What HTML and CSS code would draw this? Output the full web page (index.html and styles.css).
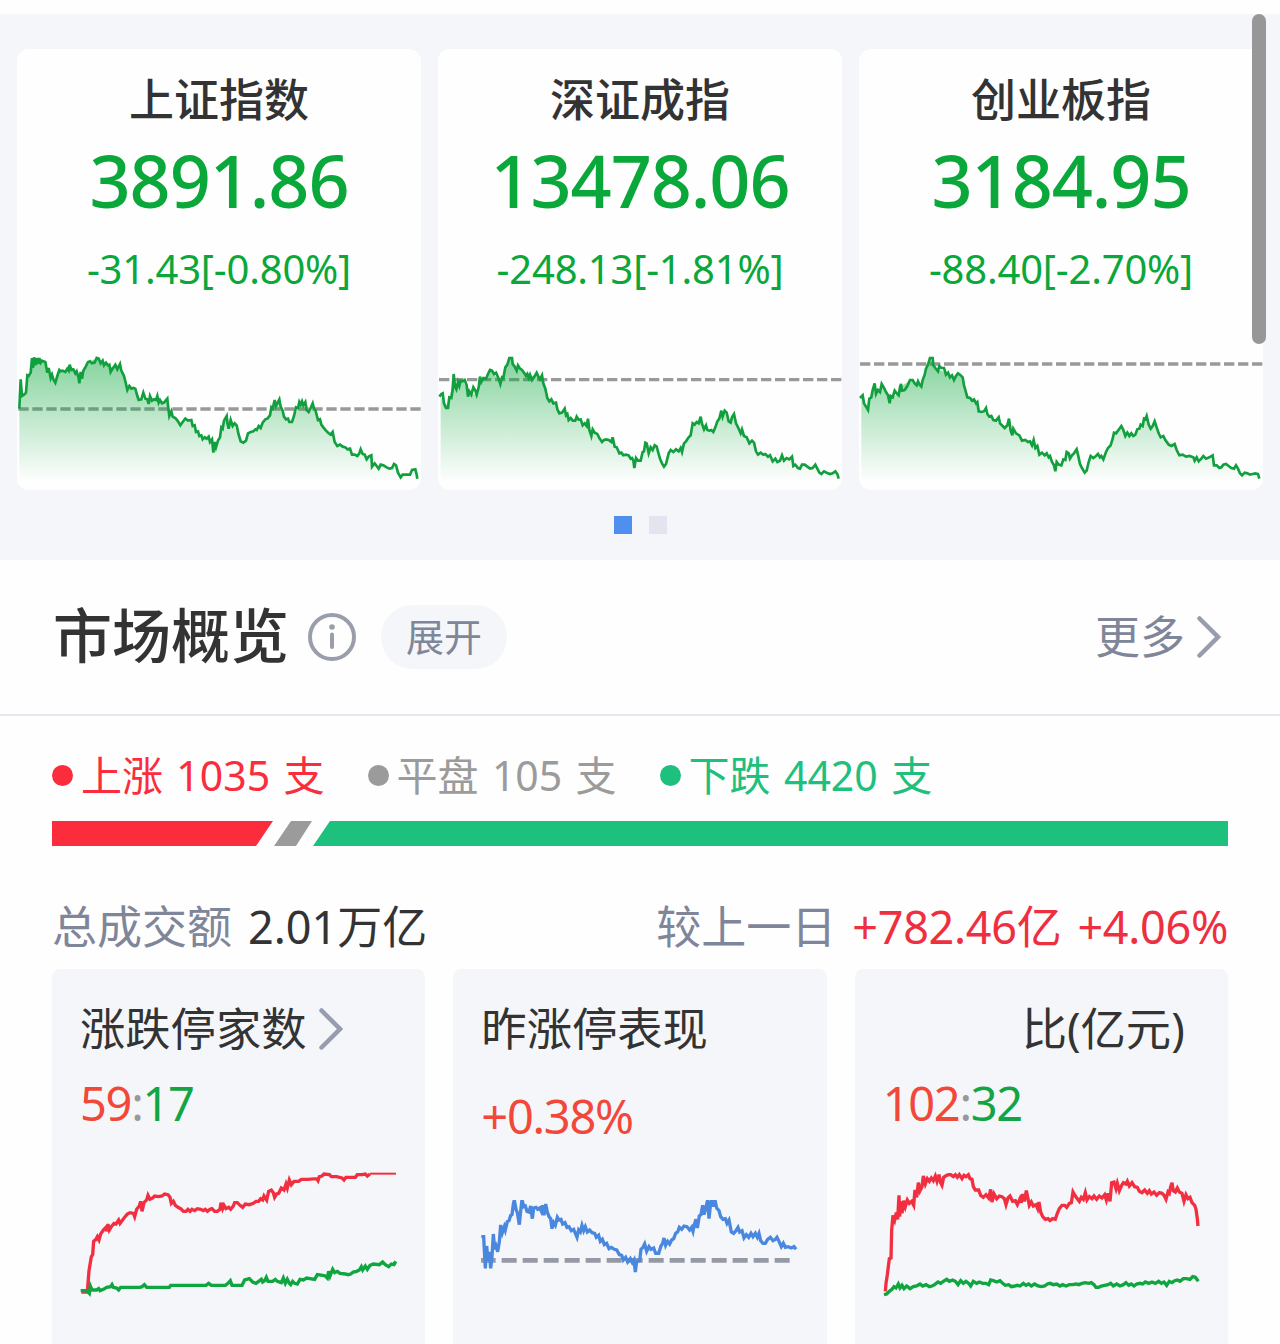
FILE: index.html
```html
<!DOCTYPE html>
<html lang="zh-CN">

<head>
    <meta charset="UTF-8">
    <meta name="viewport" content="width=device-width, initial-scale=1.0">
    <title>市场概览</title>
    <link rel="stylesheet" href="styles.css">
</head>

<body>
    <div class="indexes">
        <ul class="index_list">
            <li class="index_card">
                <h3>上证指数</h3>
                <p class="price">3891.86</p>
                <p class="change">-31.43[-0.80%]</p>
                <svg class="trend" viewBox="51 45 1212 405">
                    <defs>
                        <linearGradient id="fade" gradientUnits="userSpaceOnUse" x1="0" y1="50" x2="0" y2="425">
                            <stop offset="0" stop-color="#0aa83a" stop-opacity="0.5" />
                            <stop offset="1" stop-color="#0aa83a" stop-opacity="0" />
                        </linearGradient>
                    </defs>
                    <line class="base" x1="55" y1="207" x2="1263" y2="207" />
                    <path class="area" d="M58 206L62 122L68 166L78 158L82 108L90 100L96 54L132 62L146 100L166 126L178 92L196 94L208 76L236 110L266 66L292 54L332 82L360 76L380 138L404 146L420 178L500 184L512 222L540 250L574 240L600 288L624 294L640 326L658 292L678 230L706 254L730 306L750 276L782 260L808 230L822 190L838 186L860 242L878 242L900 190L926 212L936 196L966 262L998 278L1010 316L1064 344L1082 334L1096 356L1110 348L1118 376L1134 380L1168 384L1182 374L1202 410L1232 400L1246 390L1252 416V425H58Z" />
                    <polyline class="down" points="58,206 62,118 66,168 72,164 78,158 82,106 86,108 92,98 96,54 99,84 102,52 106,76 110,54 114,72 118,54 122,68 126,62 130,64 136,66 142,98 146,84 152,114 156,104 160,118 166,128 172,108 178,90 182,94 188,92 196,96 202,86 206,92 209,74 214,90 220,88 226,100 230,94 236,114 238,130 242,96 246,116 250,92 256,82 264,66 270,64 276,70 284,68 290,54 296,56 302,70 308,62 312,76 318,68 324,76 328,74 332,96 338,86 346,74 352,88 360,72 364,92 372,108 378,132 382,150 388,138 394,146 400,144 406,146 412,168 416,180 424,178 430,158 436,176 442,178 446,192 450,168 456,182 462,178 468,180 472,168 476,188 480,180 486,190 492,188 502,176 504,196 508,228 514,214 518,230 526,234 534,244 541,256 548,246 556,236 564,242 574,240 578,258 584,256 588,276 594,274 598,288 604,286 608,298 614,292 620,296 626,290 630,306 636,298 640,338 644,306 648,322 654,302 660,292 664,262 668,266 672,242 680,228 682,250 686,266 692,240 698,258 704,250 710,256 716,284 722,304 730,308 738,302 744,280 752,276 760,274 766,268 770,270 776,258 782,264 788,248 796,238 802,236 810,226 814,202 818,206 824,180 828,198 832,190 838,178 842,200 848,212 852,230 858,238 864,236 868,246 876,246 882,228 888,202 894,204 898,186 902,194 906,184 910,196 916,186 920,210 926,216 932,204 938,190 942,206 946,210 954,240 960,238 964,254 970,262 978,272 986,280 992,284 998,276 1004,306 1012,318 1020,314 1028,320 1036,322 1042,328 1050,326 1056,344 1064,344 1072,348 1078,340 1082,328 1088,342 1094,344 1100,358 1106,350 1114,346 1116,380 1124,370 1130,378 1136,386 1142,374 1150,376 1160,382 1168,386 1176,384 1182,372 1188,376 1194,398 1202,412 1208,404 1218,404 1230,404 1236,390 1246,388 1250,404 1252,416" />
                </svg>
            </li>
            <li class="index_card">
                <h3>深证成指</h3>
                <p class="price">13478.06</p>
                <p class="change">-248.13[-1.81%]</p>
                <svg class="trend" viewBox="24 45 1212 405">
                    <line class="base" x1="27" y1="119" x2="1236" y2="119" />
                    <path class="area" d="M32 170L44 202L58 180L70 112L80 136L100 124L118 166L142 160L152 124L166 114L182 92L210 124L240 54L262 84L300 110L318 104L336 112L356 178L374 186L390 216L404 212L420 240L468 252L486 276L516 300L548 296L568 342L594 344L614 374L632 362L648 312L676 320L702 378L722 334L756 330L792 250L812 234L830 268L850 274L868 236L880 214L900 244L912 230L932 276L970 306L984 340L1040 362L1084 352L1096 376L1156 378L1174 400L1220 398L1226 416V425H32Z" />
                    <polyline class="down" points="28,170 34,162 38,160 42,190 48,204 54,204 58,172 64,174 68,150 71,102 75,140 79,148 84,126 88,138 92,122 98,124 104,120 110,136 114,170 118,154 124,164 130,142 136,152 140,164 146,142 150,110 154,126 160,114 168,116 174,102 180,90 186,92 192,102 198,98 206,116 211,132 216,112 220,114 226,82 232,74 238,54 246,54 248,72 254,80 260,92 264,76 270,86 276,90 282,98 288,108 292,102 296,114 300,104 306,120 312,112 320,98 326,112 330,118 336,106 340,130 346,146 352,174 358,184 364,178 370,190 378,188 382,208 388,220 396,218 404,206 408,226 412,222 416,240 422,234 428,242 436,242 440,230 446,240 452,238 458,256 464,250 470,258 474,236 478,270 484,288 488,268 494,278 502,282 508,294 516,306 522,300 528,298 536,300 544,306 548,292 554,320 560,322 568,340 574,338 580,346 588,344 596,346 602,356 606,354 610,362 613,384 618,354 624,362 632,362 638,336 642,334 646,308 650,310 656,340 662,322 668,330 674,316 680,320 686,342 690,356 696,370 702,380 708,372 716,340 722,330 730,336 738,328 746,334 752,324 756,336 762,310 768,304 776,292 782,286 788,250 794,254 800,246 806,250 812,230 816,252 822,268 828,256 832,270 838,272 844,270 850,276 856,262 862,244 868,236 874,212 878,230 884,212 890,218 896,244 902,248 906,232 912,222 918,250 924,262 932,280 936,268 942,288 950,292 958,310 966,302 972,308 978,334 984,344 992,338 1000,344 1006,342 1014,350 1020,346 1028,364 1036,356 1042,366 1050,362 1056,346 1062,362 1070,354 1078,358 1086,350 1090,378 1096,374 1104,384 1110,386 1116,374 1124,374 1132,380 1140,386 1148,384 1156,374 1162,386 1168,398 1174,402 1182,394 1190,398 1200,402 1208,400 1216,394 1222,402 1226,416" />
                </svg>
            </li>
            <li class="index_card">
                <h3>创业板指</h3>
                <p class="price">3184.95</p>
                <p class="change">-88.40[-2.70%]</p>
                <svg class="trend" viewBox="27 45 1212 405">
                    <line class="base" x1="30" y1="72" x2="1238" y2="72" />
                    <path class="area" d="M34 172L54 206L62 172L74 134L84 156L96 138L118 178L144 162L154 138L184 120L212 136L230 86L242 54L252 84L290 98L312 116L326 102L340 116L354 170L382 184L392 214L416 224L460 260L476 246L490 278L520 300L552 306L572 342L600 350L616 384L634 372L652 342L680 334L704 396L722 350L760 352L794 278L816 262L832 288L856 284L888 234L902 262L914 250L934 290L974 314L988 344L1046 360L1086 350L1096 376L1160 380L1176 402L1228 402V425H34Z" />
                    <polyline class="down" points="30,174 38,166 42,190 48,200 54,210 58,176 64,172 68,150 74,130 78,162 84,150 90,156 95,132 102,144 108,156 114,166 119,190 122,168 128,172 134,152 140,160 146,166 150,142 153,132 156,152 164,150 172,138 180,120 188,120 194,130 200,136 204,124 210,136 214,140 218,120 224,104 228,86 234,74 240,54 248,54 250,76 256,84 264,94 268,78 274,84 282,84 288,104 294,98 300,112 306,106 312,120 318,108 324,100 330,104 338,112 342,136 346,150 352,172 360,174 366,182 372,178 378,190 382,186 386,214 394,216 402,214 408,204 412,222 418,230 424,228 430,240 438,242 446,232 450,250 458,258 464,264 472,256 477,236 482,272 487,286 490,266 498,280 508,286 516,302 526,300 534,306 540,304 546,316 551,300 556,324 562,318 568,344 576,338 584,346 590,340 596,352 600,348 606,366 612,376 616,394 620,366 626,374 634,376 640,358 646,360 650,336 656,340 660,356 666,346 672,340 680,328 684,344 690,372 696,384 704,398 710,392 716,366 722,348 730,354 738,348 744,342 750,352 754,348 760,358 768,336 774,324 782,316 788,296 792,278 798,280 804,272 814,258 820,270 826,288 832,278 838,288 844,280 850,288 856,284 862,268 868,266 872,254 878,258 882,236 886,238 890,228 896,254 902,266 908,258 914,244 920,262 926,280 932,292 940,288 946,300 956,314 964,318 974,312 980,330 988,346 998,344 1008,350 1018,348 1030,352 1034,362 1040,352 1046,364 1054,356 1060,348 1068,356 1078,352 1088,346 1092,376 1100,376 1108,384 1114,382 1120,374 1128,372 1136,378 1144,384 1152,386 1158,376 1164,386 1170,400 1176,406 1184,398 1192,400 1200,404 1208,402 1216,400 1224,402 1228,416" />
                </svg>
            </li>
        </ul>
        <div class="indicator">
            <i class="active"></i>
            <i></i>
        </div>
        <div class="scrollbar"></div>
    </div>

    <div class="overview_head">
        <h2>市场概览</h2>
        <svg class="info" viewBox="0 0 48 48">
            <circle cx="24" cy="24" r="22" />
            <circle class="dot" cx="24" cy="14" r="2.8" />
            <line x1="24" y1="21.500" x2="24" y2="34" />
        </svg>
        <button class="expand">展开</button>
        <a class="more" href="#">更多<svg class="arrow" viewBox="0 0 24 44">
                <polyline points="2.500,3.500 21,22 2.500,40.500" />
            </svg></a>
    </div>

    <div class="overview">
        <ul class="legend">
            <li class="rise">上涨 1035 支</li>
            <li class="flat">平盘 105 支</li>
            <li class="fall">下跌 4420 支</li>
        </ul>
        <div class="ratio">
            <span class="ratio_rise"></span>
            <span class="ratio_flat"></span>
            <span class="ratio_fall"></span>
        </div>
        <div class="turnover">
            <span class="label">总成交额</span>
            <span class="amount">2.01万亿</span>
            <span class="label prev_day">较上一日</span>
            <span class="diff">+782.46亿</span>
            <span class="diff">+4.06%</span>
        </div>

        <div class="stats">
            <div class="stat">
                <h4>涨跌停家数<svg class="arrow" viewBox="0 0 24 44">
                        <polyline points="2.500,3.500 21,22 2.500,40.500" />
                    </svg></h4>
                <p class="num"><span class="up">59</span><span class="colon">:</span><span class="dn">17</span></p>
                <svg class="chart" viewBox="120 60 952 450">
                    <polyline class="red" points="124,456 142,456 144,430 147,392 154,350 158,344 161,304 168,298 172,290 177,300 182,282 190,270 198,262 200,274 204,252 208,270 214,260 222,250 228,252 236,240 240,250 246,242 254,232 262,222 270,218 280,220 284,230 290,208 298,198 302,184 306,214 312,188 320,180 324,166 330,178 338,174 344,168 356,170 366,168 374,162 384,164 390,172 394,190 400,184 406,196 414,202 422,206 430,214 438,214 444,208 450,214 456,208 464,212 472,206 482,208 490,212 496,208 502,214 510,208 516,206 524,214 532,214 540,208 543,188 548,206 552,196 558,206 566,202 572,208 580,198 584,188 592,188 600,196 608,202 616,192 628,194 640,190 648,184 656,184 662,176 668,180 672,168 680,180 686,154 694,150 700,158 704,172 710,162 716,160 724,144 732,150 738,132 742,144 748,120 754,134 762,124 776,124 784,118 804,118 830,116 834,122 838,110 846,108 852,102 868,104 874,110 890,110 906,114 912,120 918,112 946,112 952,104 966,104 976,102 982,108 990,102" />
                    <line class="red thin" x1="990" y1="101" x2="1068" y2="101" />
                    <polyline class="green" points="122,452 140,452 148,460 151,438 156,450 170,450 176,446 180,452 190,448 200,442 212,440 216,434 220,442 230,444 236,450 242,442 300,442 306,440 313,434 320,442 388,442 392,436 498,436 506,430 514,436 556,436 564,430 571,422 576,436 606,436 614,420 628,416 638,426 648,430 656,424 664,418 668,426 674,422 679,412 684,424 698,424 706,418 712,424 724,428 730,414 736,430 742,418 748,430 752,434 758,424 764,430 772,432 780,418 790,420 800,414 824,418 832,404 848,406 856,408 862,414 866,394 870,408 878,388 884,398 892,394 900,400 916,402 924,404 932,402 940,396 950,394 958,390 964,380 968,390 976,378 982,388 990,376 1000,372 1018,374 1028,366 1036,374 1046,380 1054,372 1062,374 1067,364" />
                </svg>
            </div>
            <div class="stat">
                <h4>昨涨停表现</h4>
                <p class="num single"><span class="up">+0.38%</span></p>
                <svg class="chart" viewBox="124 60 952 450">
                    <clipPath id="top">
                        <rect x="100" y="180" width="1000" height="300" />
                    </clipPath>
                    <line class="zero" x1="123" y1="361" x2="1050" y2="361" />
                    <polyline class="blue" clip-path="url(#top)" points="125,290 132,290 134,330 137,385 141,318 145,362 149,336 153,385 157,350 161,282 165,328 169,318 174,335 179,305 183,255 188,278 194,260 197,270 203,245 208,242 213,226 217,224 221,192 224,180 229,208 233,218 239,254 243,214 247,178 252,200 257,198 262,214 268,216 273,198 278,236 282,204 289,202 294,208 300,204 305,214 309,196 313,226 318,192 323,216 328,230 333,236 337,266 342,248 347,256 353,232 358,240 364,238 369,252 376,248 382,262 388,260 395,272 402,268 407,280 412,292 417,270 422,276 427,256 432,272 437,260 443,276 450,270 457,278 465,280 470,292 477,286 482,304 488,298 494,314 501,310 508,326 515,322 524,328 531,330 539,344 546,346 551,360 558,352 564,366 572,356 578,368 583,360 587,396 591,364 600,362 604,328 610,322 615,312 621,334 628,320 634,328 642,324 648,340 657,340 664,318 669,310 673,294 678,316 684,304 690,312 696,300 702,296 708,280 714,276 719,262 726,268 733,258 742,260 750,270 756,262 760,274 764,254 769,238 773,264 779,228 784,224 789,196 793,224 798,206 804,180 808,236 813,190 817,176 821,200 826,180 831,204 838,212 843,230 850,238 857,236 862,250 868,240 875,276 882,280 889,272 895,262 900,276 907,272 913,294 920,284 927,292 934,280 940,290 947,280 953,292 958,280 963,302 970,310 977,310 984,298 992,292 1000,302 1007,298 1012,292 1018,304 1025,320 1031,310 1037,322 1045,320 1055,324 1063,320 1069,328" />
                </svg>
            </div>
            <div class="stat">
                <h4 class="clipped">比(亿元)</h4>
                <p class="num"><span class="up">102</span><span class="colon">:</span><span class="dn">32</span></p>
                <svg class="chart" viewBox="129 60 952 450">
                    <polyline class="red" points="136,454 138,430 142,404 148,356 153,354 155,270 159,226 164,240 169,218 173,238 177,166 179,230 183,184 186,220 191,182 196,200 202,180 208,190 215,184 221,196 225,150 230,172 235,128 240,152 246,140 250,108 256,132 262,116 268,124 274,114 280,122 286,108 291,124 297,104 302,128 306,136 311,112 320,106 326,104 332,104 340,110 346,104 352,112 358,104 366,116 372,106 378,110 385,104 390,116 396,118 400,140 406,150 416,150 422,166 430,172 438,164 446,174 452,148 456,186 462,162 470,176 478,168 486,170 493,176 498,194 504,174 510,168 518,184 526,182 532,194 540,176 544,188 548,162 553,184 559,152 564,176 568,196 574,186 580,198 588,194 593,206 597,186 602,216 608,230 616,238 624,236 630,242 638,236 646,238 652,220 658,206 666,196 674,196 680,202 688,190 694,188 699,156 706,168 712,176 718,184 724,172 730,178 736,158 741,180 748,170 756,176 762,168 770,178 778,168 786,174 794,164 799,180 804,160 810,184 815,128 822,126 828,146 832,130 838,152 844,138 850,128 858,132 862,124 868,138 876,128 884,140 892,142 898,154 906,158 914,150 922,160 928,152 934,162 942,156 950,166 958,158 966,160 972,166 978,178 984,156 988,160 992,140 996,128 1000,152 1006,156 1012,144 1018,156 1026,160 1032,184 1038,164 1044,176 1050,172 1056,188 1064,196 1068,208 1072,236 1074,258" />
                    <polyline class="green" points="132,464 140,462 148,454 156,448 162,440 168,444 175,432 180,444 186,436 192,446 200,438 210,446 220,440 230,438 240,432 248,438 258,434 268,440 276,438 284,434 294,426 302,430 310,424 320,418 328,424 338,420 346,424 354,434 362,422 370,430 378,424 386,430 392,438 400,424 410,430 418,426 428,430 438,430 446,434 452,420 460,422 470,426 480,422 488,430 496,436 506,434 514,440 524,438 532,436 540,438 550,430 558,436 566,432 574,438 584,432 594,438 604,440 614,438 622,432 630,430 640,434 650,432 660,438 668,434 678,438 688,434 698,434 708,432 716,434 726,430 736,428 746,430 754,428 762,434 768,442 776,442 784,438 794,436 804,434 812,430 820,438 830,432 840,438 850,434 858,428 866,436 874,432 882,438 890,432 900,430 908,432 916,426 926,430 936,426 946,430 956,424 964,430 972,426 980,436 988,424 996,428 1004,422 1012,420 1020,424 1030,416 1040,416 1050,418 1058,410 1066,412 1075,424" />
                </svg>
            </div>
        </div>
    </div>
</body>

</html>
```
FILE: styles.css
```css
* {
    box-sizing: border-box;
    margin: 0;
    padding: 0;
}

body {
    width: 1280px;
    height: 1344px;
    padding-top: 14px;
    overflow: hidden;
    font-family: "Noto Sans", "Noto Sans CJK SC", sans-serif;
    color: #333;
    background: #fefefe;
}

ul {
    list-style: none;
}

h2,
h3,
h4 {
    font-weight: 500;
}

svg {
    display: block;
    flex-shrink: 0;
}

polyline,
line {
    fill: none;
    stroke-linejoin: miter;
}

/* 指数 */
.indexes {
    position: relative;
    height: 546px;
    padding: 35px 17px 0;
    background: #f5f6fa;
}

.index_list {
    display: grid;
    grid-template-columns: repeat(3, 1fr);
    gap: 17px;
}

.index_card {
    display: flex;
    flex-direction: column;
    height: 441px;
    padding-top: 21px;
    text-align: center;
    background: #fefefe;
    border-radius: 12px;
    overflow: hidden;
}

.index_card h3 {
    font-size: 45px;
    line-height: 60px;
}

.price {
    height: 100px;
    font-size: 72px;
    font-weight: 500;
    line-height: 100px;
    letter-spacing: -1.1px;
    color: #0aa83a;
}

.change {
    font-size: 40px;
    line-height: 78px;
    letter-spacing: -0.2px;
    color: #0aa83a;
}

.trend {
    width: 404px;
    height: 135px;
    margin-top: auto;
}

.area {
    fill: url(#fade);
}

.base {
    stroke: #999;
    stroke-width: 10;
    stroke-dasharray: 31 11;
}

.down {
    stroke: #12a03f;
    stroke-width: 8;
}

.indicator {
    display: flex;
    justify-content: center;
    gap: 17px;
    margin-top: 26px;
}

.indicator i {
    width: 18px;
    height: 18px;
    background: #e4e4f0;
}

.indicator .active {
    background: #4f8fee;
}

.scrollbar {
    position: absolute;
    top: 0;
    right: 14px;
    width: 14px;
    height: 330px;
    background: #979797;
    border-radius: 7px;
}

/* 市场概览 */
.overview_head {
    display: flex;
    align-items: center;
    height: 156px;
    padding: 0 59px 0 53px;
    border-bottom: 2px solid #e7e7ef;
}

.overview_head h2 {
    margin-top: -4px;
    font-size: 59px;
    line-height: 80px;
}

.info {
    width: 48px;
    height: 48px;
    margin-left: 19px;
    fill: none;
    stroke: #9a9eab;
    stroke-width: 4;
    stroke-linecap: round;
}

.info .dot {
    fill: #9a9eab;
    stroke: none;
}

.expand {
    width: 126px;
    height: 64px;
    margin-left: 25px;
    padding-bottom: 2px;
    font-family: inherit;
    font-size: 38px;
    line-height: 62px;
    color: #80869a;
    background: #f5f6fa;
    border: none;
    border-radius: 32px;
}

.more {
    display: flex;
    align-items: center;
    gap: 12px;
    margin-left: auto;
    font-size: 45px;
    line-height: 60px;
    color: #80869a;
    text-decoration: none;
}

.arrow {
    width: 24px;
    height: 44px;
    stroke: #979caf;
    stroke-width: 4.5;
    stroke-linecap: round;
}

.overview {
    padding: 29px 52px 0;
}

.legend {
    display: flex;
    gap: 43px;
    font-size: 41px;
    line-height: 60px;
    word-spacing: 2.7px;
}

.legend li {
    display: flex;
    align-items: center;
    gap: 8px;
}

.legend li::before {
    content: "";
    width: 21px;
    height: 21px;
    border-radius: 50%;
    background: currentColor;
}

.rise {
    color: #fb2c3c;
}

.flat {
    color: #9b9b9b;
}

.fall {
    color: #1dc07c;
}

.ratio {
    display: flex;
    gap: 1px;
    height: 25px;
    margin-top: 16px;
}

.ratio_rise {
    width: 221px;
    background: #fb2c3c;
    clip-path: polygon(0 0, 100% 0, calc(100% - 17px) 100%, 0 100%);
}

.ratio_flat {
    width: 38px;
    background: #9b9b9b;
    clip-path: polygon(17px 0, 100% 0, calc(100% - 16px) 100%, 0 100%);
}

.ratio_fall {
    flex: 1;
    background: #1dc07c;
    clip-path: polygon(17px 0, 100% 0, 100% 100%, 0 100%);
}

.turnover {
    display: flex;
    gap: 16px;
    height: 60px;
    margin-top: 51px;
    font-size: 45px;
    line-height: 60px;
    white-space: nowrap;
}

.label {
    color: #80869a;
}

.prev_day {
    margin-left: auto;
}

.diff {
    letter-spacing: -0.3px;
    color: #ee2f40;
}

.stats {
    display: grid;
    grid-template-columns: repeat(3, 1fr);
    gap: 28px;
    margin-top: 12px;
}

.stat {
    height: 400px;
    padding: 30px 28px 0;
    background: #f5f6fa;
    border-radius: 8px;
}

.stat h4 {
    display: flex;
    align-items: center;
    gap: 12px;
    font-size: 45.3px;
    font-weight: 400;
    line-height: 60px;
}

.stat .clipped {
    padding-left: 139px;
}

.num {
    height: 131px;
    padding-top: 14px;
    font-size: 47px;
    line-height: 60px;
    letter-spacing: -1.3px;
}

.single {
    padding-top: 27px;
}

.up {
    color: #f2483a;
}

.colon {
    color: #999;
}

.dn {
    color: #12a544;
}

.chart {
    width: 317.333px;
    height: 150px;
    margin-top: -30px;
}

.red,
.green,
.blue {
    stroke-width: 10;
}

.red {
    stroke: #f22f40;
}

.thin {
    stroke-width: 6;
}

.green {
    stroke: #0fa53f;
}

.blue {
    stroke: #4a88e0;
}

.zero {
    stroke: #9599a6;
    stroke-width: 14;
    stroke-dasharray: 45 18;
}
```
